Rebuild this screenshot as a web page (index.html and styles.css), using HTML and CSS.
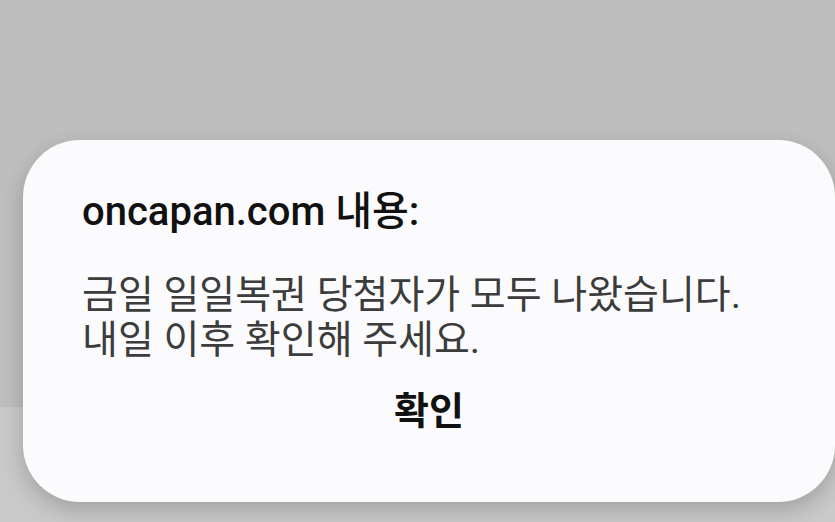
FILE: index.html
```html
<!DOCTYPE html>
<html lang="ko">
<head>
<meta charset="UTF-8">
<title>oncapan.com</title>
<link rel="stylesheet" href="styles.css">
</head>
<body>
<div class="page">
    <div class="page-top"></div>
    <div class="page-bar"></div>
</div>

<div class="dialog">
    <div class="dialog-title">oncapan.com 내용:</div>
    <div class="dialog-msg">금일 일일복권 당첨자가 모두 나왔습니다.<br>내일 이후 확인해 주세요.</div>
    <div class="dialog-btns">
        <button class="btn-ok">확인</button>
    </div>
</div>
</body>
</html>
```

FILE: styles.css
```css
body{
    margin: 0;
    width: 835px;
    height: 522px;
    overflow: hidden;
    font-family: Roboto, "Noto Sans CJK KR", sans-serif;
}
.page{
    display: flex;
    flex-direction: column;
    height: 522px;
}
.page-top{
    height: 407px;
    background: #bebebe;
}
.page-bar{
    flex: 1;
    background: #c9c9c9;
}
.dialog{
    position: absolute;
    left: 23px;
    top: 140px;
    width: 812px;
    height: 362px;
    box-sizing: border-box;
    padding: 50px 59px 0;
    background: #fbfbfd;
    border-radius: 57px;
    box-shadow: 0 8px 22px rgba(0,0,0,0.2);
}
.dialog-title{
    font-size: 40px;
    font-weight: 500;
    color: #111;
    line-height: 44px;
}
.dialog-msg{
    margin-top: 39px;
    font-size: 39px;
    line-height: 45px;
    color: #3c3c3c;
}
.dialog-btns{
    display: flex;
    justify-content: center;
    margin-top: 23px;
}
.btn-ok{
    border: none;
    background: none;
    padding: 0;
    font-family: inherit;
    font-size: 38px;
    font-weight: 700;
    color: #111;
    line-height: 50px;
}
```
